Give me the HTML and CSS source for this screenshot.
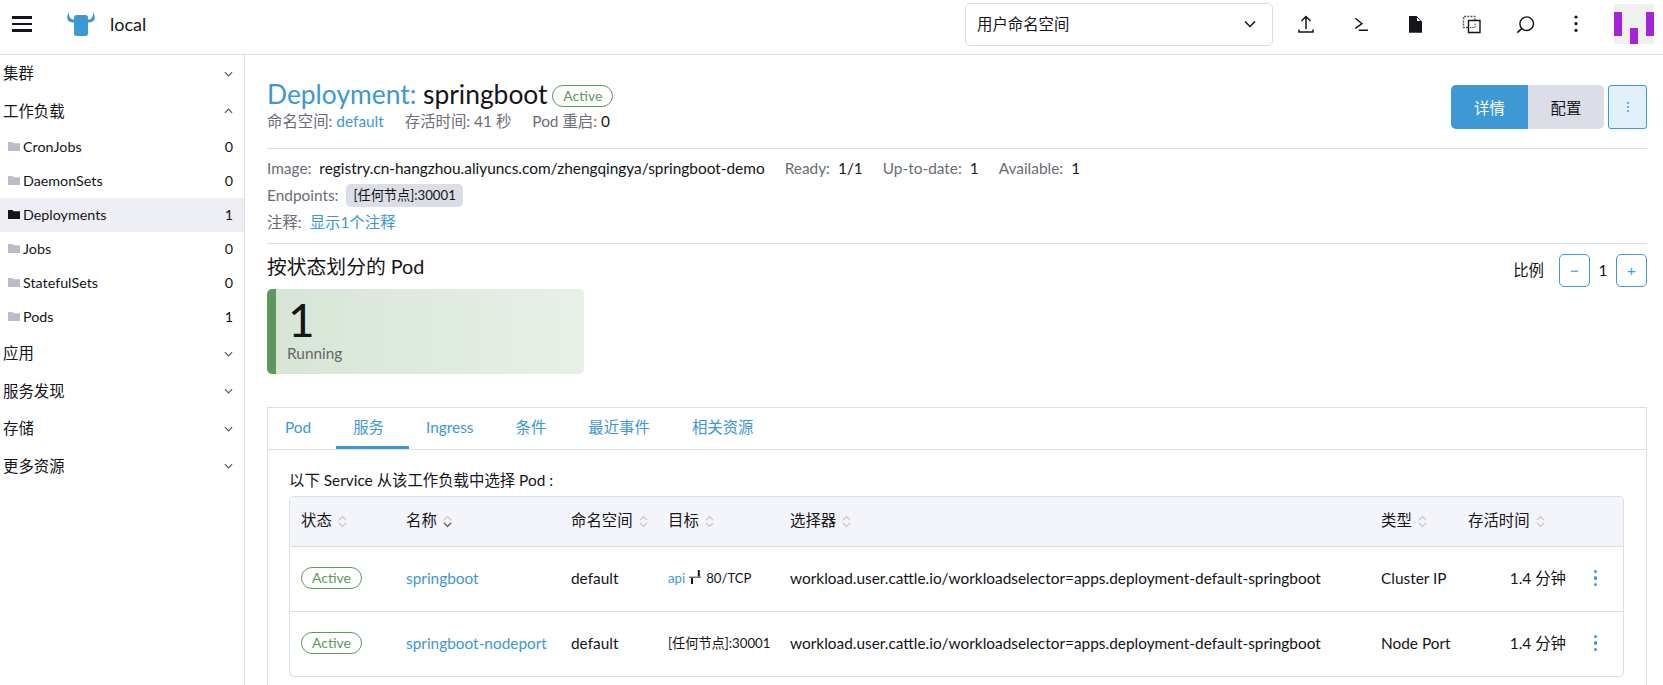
FILE: index.html
```html
<!DOCTYPE HTML>
<html lang="zh-CN">
<head>
<meta charset="UTF-8">
<title>Deployment: springboot</title>
<link rel="stylesheet" href="styles.css">
</head>
<body>
<div class="topbar">
	<div class="burger"><i></i><i></i><i></i></div>
	<svg class="logo" viewBox="0 0 28 24"><path d="M7 10.500C3 10.500 .2 9 .2 6 .2 4 1 2 1.500 0 2 2 2.200 4.500 3.500 6 4.500 7.200 6 7.500 7 7.500V5.500C7 4 8 3 9.500 3h9C20 3 21 4 21 5.500V7.500C22 7.500 23.500 7.200 24.500 6 25.800 4.500 26 2 26.500 0 27 2 27.800 4 27.800 6 27.800 9 25 10.500 21 10.500V21.500C21 23 20 24 18.500 24h-9C8 24 7 23 7 21.500Z" fill="#3d98d3"/></svg>
	<span class="cluster">local</span>
	<div class="ns_select"><span>用户命名空间</span><svg class="chev" viewBox="0 0 12 8"><path d="M1 1.500 6 6.500 11 1.500" fill="none" stroke="#141419" stroke-width="1.500"/></svg></div>
	<div class="tools">
		<svg viewBox="0 0 20 20"><path d="M10 15V2.500M5.500 7 10 2.500 14.500 7M3 15.500V18H17V15.500" fill="none" stroke="#141419" stroke-width="1.500"/></svg>
		<svg viewBox="0 0 20 20"><path d="M4.300 4.300 11 9.700 4.300 14.300M7.700 16.300H17" fill="none" stroke="#141419" stroke-width="1.400"/></svg>
		<svg viewBox="0 0 20 20"><path d="M3 2h7.500L16 7.500V18.700H3Z" fill="#141419"/><path d="M11 3.500V7h3.500Z" fill="#fff"/></svg>
		<svg viewBox="0 0 20 20"><path d="M7 13.500H2.500V2.500H14V6.500" fill="none" stroke="#555" stroke-width="1.400" stroke-dasharray="2 1.200"/><path d="M7.500 6.500H19V18.500H7.500Z" fill="none" stroke="#141419" stroke-width="1.400"/><path d="M9 13.500h5V9" fill="none" stroke="#555" stroke-width="1.100" stroke-dasharray="1.500 1"/></svg>
		<svg viewBox="0 0 20 20"><circle cx="10.700" cy="9.700" r="6.800" fill="none" stroke="#141419" stroke-width="1.400"/><path d="M5.700 14.700 1.300 18.700" stroke="#141419" stroke-width="1.600"/></svg>
		<svg class="tool_more" viewBox="0 0 20 20"><circle cx="10" cy="3" r="1.600" fill="#141419"/><circle cx="10" cy="9.700" r="1.600" fill="#141419"/><circle cx="10" cy="16.300" r="1.600" fill="#141419"/></svg>
	</div>
	<div class="avatar"><b class="a1"></b><b class="a2"></b><b class="a3"></b></div>
</div>

<div class="layout">
	<ul class="side">
		<li class="group">集群<svg class="caret" viewBox="0 0 10 6"><path d="M1 1 5 5 9 1" fill="none" stroke="#555" stroke-width="1.300"/></svg></li>
		<li class="group">工作负载<svg class="caret" viewBox="0 0 10 6"><path d="M1 5 5 1 9 5" fill="none" stroke="#555" stroke-width="1.300"/></svg></li>
		<li class="item"><svg class="folder" viewBox="0 0 12 10"><path d="M0 1h4.500l1.200 1.300H12V10H0Z"/></svg>CronJobs<span>0</span></li>
		<li class="item"><svg class="folder" viewBox="0 0 12 10"><path d="M0 1h4.500l1.200 1.300H12V10H0Z"/></svg>DaemonSets<span>0</span></li>
		<li class="item active"><svg class="folder" viewBox="0 0 12 10"><path d="M0 1h4.500l1.200 1.300H12V10H0Z"/></svg>Deployments<span>1</span></li>
		<li class="item"><svg class="folder" viewBox="0 0 12 10"><path d="M0 1h4.500l1.200 1.300H12V10H0Z"/></svg>Jobs<span>0</span></li>
		<li class="item"><svg class="folder" viewBox="0 0 12 10"><path d="M0 1h4.500l1.200 1.300H12V10H0Z"/></svg>StatefulSets<span>0</span></li>
		<li class="item"><svg class="folder" viewBox="0 0 12 10"><path d="M0 1h4.500l1.200 1.300H12V10H0Z"/></svg>Pods<span>1</span></li>
		<li class="group">应用<svg class="caret" viewBox="0 0 10 6"><path d="M1 1 5 5 9 1" fill="none" stroke="#555" stroke-width="1.300"/></svg></li>
		<li class="group">服务发现<svg class="caret" viewBox="0 0 10 6"><path d="M1 1 5 5 9 1" fill="none" stroke="#555" stroke-width="1.300"/></svg></li>
		<li class="group">存储<svg class="caret" viewBox="0 0 10 6"><path d="M1 1 5 5 9 1" fill="none" stroke="#555" stroke-width="1.300"/></svg></li>
		<li class="group">更多资源<svg class="caret" viewBox="0 0 10 6"><path d="M1 1 5 5 9 1" fill="none" stroke="#555" stroke-width="1.300"/></svg></li>
	</ul>

	<div class="main">
		<div class="head">
			<div class="head_left">
				<h1><a>Deployment:</a> springboot <em class="badge">Active</em></h1>
				<p class="sub"><span>命名空间: <a>default</a></span><span>存活时间: 41 秒</span><span>Pod 重启: <b>0</b></span></p>
			</div>
			<div class="actions">
				<button class="btn_on">详情</button><button class="btn_off">配置</button>
				<button class="btn_more"><i></i><i></i><i></i></button>
			</div>
		</div>
		<div class="info">
			<p><label>Image:</label><span class="val">registry.cn-hangzhou.aliyuncs.com/zhengqingya/springboot-demo</span><label class="gap">Ready:</label><span class="val">1/1</span><label class="gap">Up-to-date:</label><span class="val">1</span><label class="gap">Available:</label><span class="val">1</span></p>
			<p><label>Endpoints:</label><span class="tag">[任何节点]:30001</span></p>
			<p><label>注释:</label><a>显示1个注释</a></p>
		</div>
		<div class="pods">
			<div class="pods_left">
				<h3>按状态划分的 Pod</h3>
				<div class="card"><strong>1</strong><span>Running</span></div>
			</div>
			<div class="scale"><span>比例</span><button>−</button><b>1</b><button>+</button></div>
		</div>
		<div class="tabs">
			<ul class="tab_bar">
				<li>Pod</li><li class="cur">服务</li><li>Ingress</li><li>条件</li><li>最近事件</li><li>相关资源</li>
			</ul>
			<div class="tab_body">
				<p class="note">以下 Service 从该工作负载中选择 Pod :</p>
				<div class="tbl">
					<div class="row th">
						<div>状态<svg class="sort" viewBox="0 0 10 14"><path d="M1 5.500 5 1.500 9 5.500M1 8.500 5 12.500 9 8.500"/></svg></div>
						<div>名称<svg class="sort sort_on" viewBox="0 0 10 14"><path d="M1 5.500 5 1.500 9 5.500"/><path class="dn" d="M1 8.500 5 12.500 9 8.500"/></svg></div>
						<div>命名空间<svg class="sort" viewBox="0 0 10 14"><path d="M1 5.500 5 1.500 9 5.500M1 8.500 5 12.500 9 8.500"/></svg></div>
						<div>目标<svg class="sort" viewBox="0 0 10 14"><path d="M1 5.500 5 1.500 9 5.500M1 8.500 5 12.500 9 8.500"/></svg></div>
						<div>选择器<svg class="sort" viewBox="0 0 10 14"><path d="M1 5.500 5 1.500 9 5.500M1 8.500 5 12.500 9 8.500"/></svg></div>
						<div>类型<svg class="sort" viewBox="0 0 10 14"><path d="M1 5.500 5 1.500 9 5.500M1 8.500 5 12.500 9 8.500"/></svg></div>
						<div>存活时间<svg class="sort" viewBox="0 0 10 14"><path d="M1 5.500 5 1.500 9 5.500M1 8.500 5 12.500 9 8.500"/></svg></div>
						<div></div>
					</div>
					<div class="row">
						<div><em class="badge">Active</em></div>
						<div><a>springboot</a></div>
						<div>default</div>
						<div class="target small"><a>api</a><svg class="port" viewBox="0 0 12 14"><path class="bar" d="M0 6.500H12V8H0Z"/><path d="M8.800 0H10.800V6.500H8.800ZM2 8H4V14H2Z"/></svg>80/TCP</div>
						<div>workload.user.cattle.io/workloadselector=apps.deployment-default-springboot</div>
						<div>Cluster IP</div>
						<div class="age">1.4 分钟</div>
						<div class="more"><i></i><i></i><i></i></div>
					</div>
					<div class="row">
						<div><em class="badge">Active</em></div>
						<div><a>springboot-nodeport</a></div>
						<div>default</div>
						<div class="target small">[任何节点]:30001</div>
						<div>workload.user.cattle.io/workloadselector=apps.deployment-default-springboot</div>
						<div>Node Port</div>
						<div class="age">1.4 分钟</div>
						<div class="more"><i></i><i></i><i></i></div>
					</div>
				</div>
			</div>
		</div>
	</div>
</div>
</body>
</html>
```

FILE: styles.css
```css
html, body, div, ul, li, h1, h3, p, button { margin:0; padding:0; }
html, body { height:100%; overflow:hidden; }
body { font:15.4px/21px Lato,"Noto Sans CJK SC",sans-serif; color:#141419; background-color:#fff; }
ul li { list-style:none; }
a { color:#3d98d3; }
em { font-style:normal; }

.topbar { display:flex; align-items:center; box-sizing:content-box; height:48px; padding-bottom:6px; border-bottom:1px solid #dcdee7; }
.burger { display:flex; flex-direction:column; gap:4px; width:20px; margin-left:12px; }
.burger i { display:block; height:2.500px; background-color:#141419; }
.logo { width:28px; height:24px; margin-left:35px; }
.cluster { flex:1; margin-left:15px; font-size:18px; }
.ns_select { display:flex; align-items:center; justify-content:space-between; box-sizing:border-box; width:308px; height:43px; padding:0 16px 0 11px; border:1px solid #dcdee7; border-radius:5px; }
.chev { width:12px; height:8px; }
.tools { display:flex; align-items:center; gap:35px; margin:0 28px 0 23px; }
.tools svg { width:20px; height:20px; }
.tools .tool_more { margin-left:-5px; }
.avatar { position:relative; width:40px; height:40px; margin-right:9px; background-color:#f0f0f0; }
.avatar b { position:absolute; width:8px; background-color:#a324d6; }
.a1 { left:0; top:8px; height:24px; }
.a2 { left:16px; top:24px; height:16px; }
.a3 { left:32px; top:8px; height:24px; }

.layout { display:flex; height:630px; }
.side { flex:none; width:244px; border-right:1px solid #dcdee7; }
.group { display:flex; align-items:center; justify-content:space-between; height:37.500px; padding:0 11px 0 3px; }
.item + .group { margin-top:1px; }
.caret { width:9px; height:6px; }
.item { display:flex; align-items:center; box-sizing:border-box; height:34px; padding:0 11px 2px 8px; font-size:14.300px; }
.item span { margin-left:auto; }
.folder { width:12px; height:10px; margin-right:3px; fill:#bcbcc9; }
.active { background-color:#eeeff4; }
.active .folder { fill:#141419; }

.main { flex:1; padding:0 16px 0 22px; overflow:hidden; }
.head { display:flex; justify-content:space-between; height:93px; border-bottom:1px solid #dcdee7; }
h1 { margin-top:22px; font-size:26.400px; line-height:34px; font-weight:normal; }
h1 .badge { position:relative; top:-3px; margin-left:-2px; }
.badge { display:inline-block; box-sizing:border-box; width:61px; height:22px; font-size:14px; line-height:20px; text-align:center; color:#5d995d; border:1px solid #5d995d; border-radius:11px; }
.sub { color:#6c6c76; }
.sub span { margin-right:21px; }
.sub b { font-weight:normal; color:#141419; }
.actions { display:flex; margin-top:30px; }
.actions button { height:44px; font:15.4px Lato,"Noto Sans CJK SC",sans-serif; color:#141419; border:0; }
.actions .btn_on { width:77px; color:#fff; background-color:#3d98d3; border-radius:5px 0 0 5px; }
.actions .btn_off { width:76px; background-color:#dcdee7; border-radius:0 5px 5px 0; }
.actions .btn_more { display:flex; flex-direction:column; align-items:center; justify-content:center; gap:2px; box-sizing:border-box; width:39px; margin-left:4px; background-color:#e2f0f9; border:1px solid #3d98d3; border-radius:3px; }
.btn_more i { width:2px; height:2px; border-radius:50%; background-color:#3d98d3; }

.info { height:95px; padding-top:6px; box-sizing:border-box; border-bottom:1px solid #dcdee7; }
.info p { display:flex; align-items:center; height:27px; }
.info label { margin-right:8px; color:#6c6c76; }
.info .gap { margin-left:20px; }
.tag { height:23px; padding:0 7px; line-height:23px; font-size:13.200px; background-color:#dcdee7; border-radius:5px; }

.pods { display:flex; justify-content:space-between; height:163px; }
h3 { margin-top:10px; font-size:19.800px; line-height:25px; font-weight:normal; }
.card { display:flex; flex-direction:column; box-sizing:border-box; width:317px; height:85px; margin-top:10px; padding:9px 0 0 11px; background:linear-gradient(to right,rgba(93,153,93,.25),rgba(93,153,93,.14)); border-left:9px solid #5d995d; border-radius:5px; }
.card strong { padding-left:1px; font-size:46px; line-height:44px; font-weight:normal; }
.card span { margin-top:1px; line-height:20px; color:#666; }
.scale { display:flex; align-items:center; height:33px; margin-top:10px; }
.scale button { width:31px; height:33px; font-size:15px; color:#3d98d3; background-color:#fff; border:1px solid #3d98d3; border-radius:5px; }
.scale span { margin-right:15px; }
.scale b { width:26px; font-weight:normal; text-align:center; }

.tabs { height:300px; border:1px solid #dcdee7; border-bottom:0; }
.tab_bar { display:flex; height:41px; border-bottom:1px solid #dcdee7; }
.tab_bar li { box-sizing:border-box; height:41px; padding:9px 25px 0 17px; color:#3d98d3; }
.tab_bar .cur { border-bottom:3px solid #3d98d3; }
.tab_body { padding:20px 22px 0 21px; }
.note { line-height:21px; }
.tbl { margin-top:5px; border:1px solid #dcdee7; border-radius:5px; }
.row { display:grid; grid-template-columns:105px 165px 97px 122px 591px 87px 123px 1fr; align-items:center; box-sizing:border-box; height:65px; padding-bottom:2px; border-top:1px solid #dcdee7; }
.row > div { padding-left:11px; white-space:nowrap; }
.th { height:49px; padding-bottom:3px; border-top:0; background-color:#f4f5fa; border-radius:5px 5px 0 0; }
.sort { width:9px; height:13px; margin-left:6px; vertical-align:-2px; fill:none; stroke:#c4c4c4; stroke-width:1.200; }
.sort_on .dn { stroke:#444; }
.small { font-size:13.200px; }
.target { display:flex; align-items:center; }
.port { width:12px; height:14px; margin:-3px 5px 0 4px; fill:#141419; }
.port .bar { fill:#777; }
.row .age { padding-right:14px; text-align:right; }
.row .more { display:flex; flex-direction:column; align-items:center; gap:3px; padding:0 12px 0 0; }
.more i { width:3.500px; height:3.500px; border-radius:50%; background-color:#3d98d3; }
```
